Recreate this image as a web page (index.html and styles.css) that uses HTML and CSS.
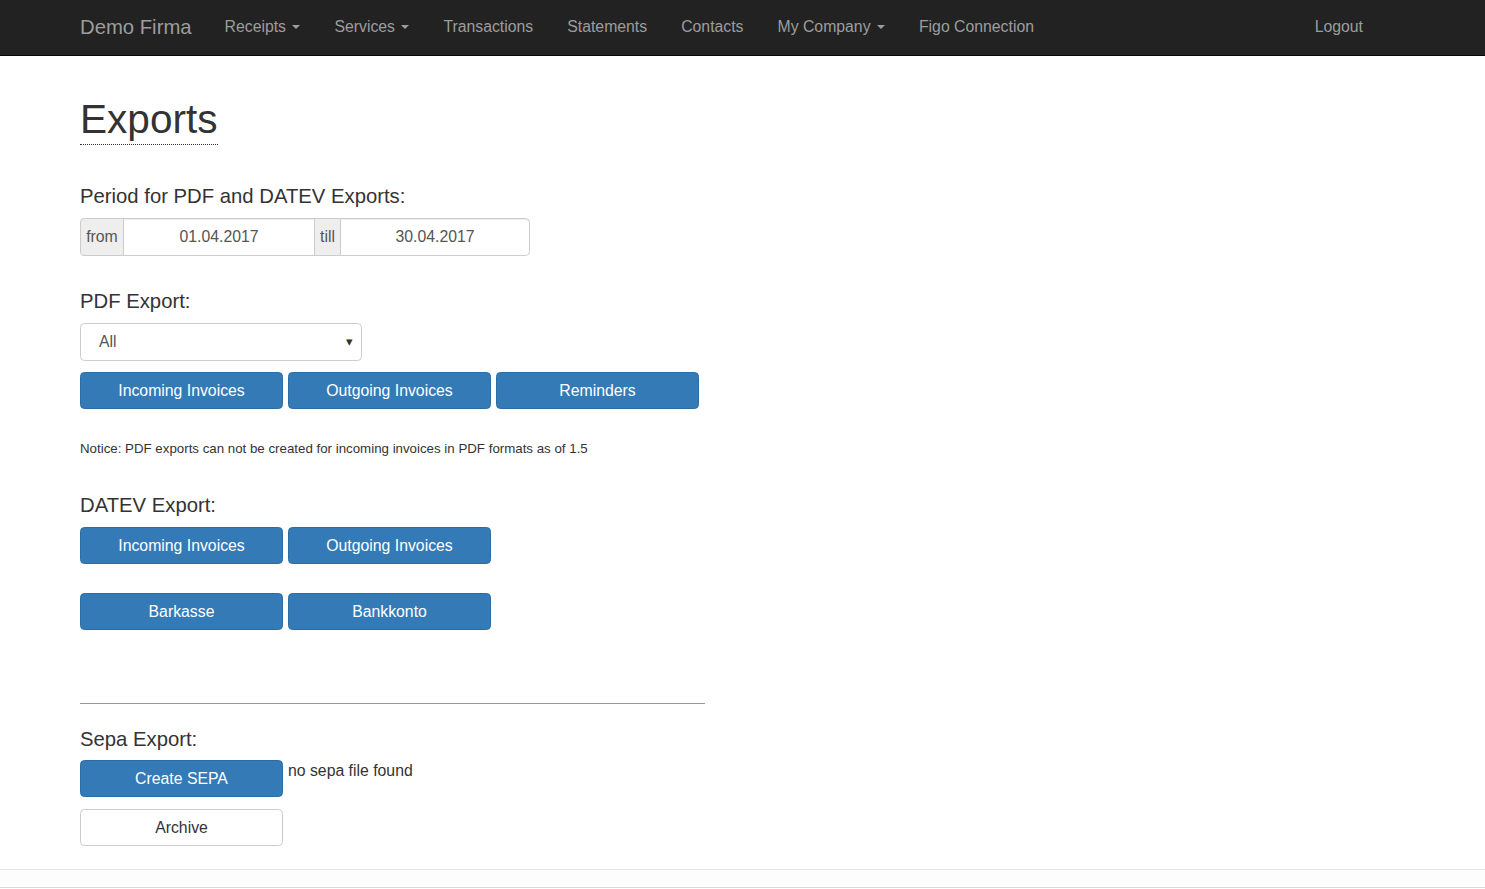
FILE: index.html
```html
<!DOCTYPE html>
<html>
<head>
<meta charset="utf-8">
<title>Exports</title>
<link rel="stylesheet" href="styles.css">
</head>
<body>
<nav class="navbar">
  <a class="brand" href="#">Demo Firma</a>
  <ul class="nav">
    <li><a href="#">Receipts <span class="caret"></span></a></li>
    <li><a href="#">Services <span class="caret"></span></a></li>
    <li><a href="#">Transactions</a></li>
    <li><a href="#">Statements</a></li>
    <li><a href="#">Contacts</a></li>
    <li><a href="#">My Company <span class="caret"></span></a></li>
    <li><a href="#">Figo Connection</a></li>
  </ul>
  <ul class="nav nav-right">
    <li><a href="#">Logout</a></li>
  </ul>
</nav>

<main class="content">
  <h1 class="title"><span class="title-text">Exports</span></h1>

  <h4 class="section period">Period for PDF and DATEV Exports:</h4>
  <div class="input-group">
    <span class="addon addon-from">from</span>
    <span class="field field-from">01.04.2017</span>
    <span class="addon addon-till">till</span>
    <span class="field field-till">30.04.2017</span>
  </div>

  <h4 class="section pdf">PDF Export:</h4>
  <div class="select">
    <span>All</span>
    <span class="arrow">▾</span>
  </div>
  <div class="btn-row row-pdf">
    <button class="btn btn-primary">Incoming Invoices</button>
    <button class="btn btn-primary">Outgoing Invoices</button>
    <button class="btn btn-primary">Reminders</button>
  </div>
  <p class="notice">Notice: PDF exports can not be created for incoming invoices in PDF formats as of 1.5</p>

  <h4 class="section datev">DATEV Export:</h4>
  <div class="btn-row row-datev">
    <button class="btn btn-primary">Incoming Invoices</button>
    <button class="btn btn-primary">Outgoing Invoices</button>
  </div>
  <div class="btn-row row-cash">
    <button class="btn btn-primary">Barkasse</button>
    <button class="btn btn-primary">Bankkonto</button>
  </div>

  <hr class="divider">

  <h4 class="section sepa">Sepa Export:</h4>
  <div class="sepa-row">
    <button class="btn btn-primary">Create SEPA</button>
    <span class="sepa-status">no sepa file found</span>
  </div>
  <div class="btn-row row-archive">
    <button class="btn btn-default">Archive</button>
  </div>
</main>
<footer class="footer"></footer>
</body>
</html>
```
FILE: styles.css
```css
* { box-sizing: border-box; }
html, body { margin: 0; padding: 0; }
body {
  font-family: "Liberation Sans", Arial, Helvetica, sans-serif;
  font-size: 15.8px;
  line-height: 22px;
  color: #333;
  background: #fff;
}
a { text-decoration: none; }

.navbar {
  display: flex;
  align-items: center;
  height: 56px;
  background: #222;
  border-bottom: 1px solid #080808;
  padding: 0 122px 2px 80px;
}
.brand {
  font-size: 20.3px;
  color: #9d9d9d;
  margin-right: 16px;
  line-height: 22px;
}
.nav {
  display: flex;
  list-style: none;
  margin: 0;
  padding: 0;
}
.nav a {
  display: block;
  padding: 0 17px;
  color: #9d9d9d;
  font-size: 15.8px;
  line-height: 22px;
}
.nav-right { margin-left: auto; }
.nav-right a { padding-right: 0; }
.caret {
  display: inline-block;
  width: 0;
  height: 0;
  margin-left: 2px;
  vertical-align: middle;
  border-top: 4.4px solid #9d9d9d;
  border-left: 4.4px solid transparent;
  border-right: 4.4px solid transparent;
}

.content { padding: 0 80px; }

.title {
  margin: 41px 0 0;
  font-size: 40.6px;
  line-height: 44px;
  font-weight: 500;
}
.title-text {
  border-bottom: 1px dotted #333;
  padding-bottom: 2px;
}

.section {
  margin: 0;
  font-size: 20.3px;
  line-height: 22px;
  font-weight: 500;
}
.period { margin-top: 44px; }
.pdf { margin-top: 34px; }
.datev { margin-top: 36px; }
.sepa { margin-top: 24px; }

.input-group {
  display: flex;
  margin-top: 11px;
  height: 38px;
  width: 450px;
}
.addon {
  display: flex;
  align-items: center;
  justify-content: center;
  background: #eee;
  border: 1px solid #ccc;
  color: #555;
}
.addon-from {
  width: 43px;
  border-right: 0;
  border-radius: 4.4px 0 0 4.4px;
}
.addon-till {
  width: 25px;
  border-left: 0;
  border-right: 0;
}
.field {
  display: flex;
  align-items: center;
  justify-content: center;
  border: 1px solid #ccc;
  color: #555;
  background: #fff;
  box-shadow: inset 0 1px 1px rgba(0,0,0,.075);
}
.field-from { width: 192px; }
.field-till {
  width: 190px;
  border-radius: 0 4.4px 4.4px 0;
}

.select {
  display: flex;
  align-items: center;
  justify-content: space-between;
  margin-top: 11px;
  width: 282px;
  height: 38px;
  padding: 0 8px 0 18px;
  border: 1px solid #ccc;
  border-radius: 4.4px;
  color: #555;
  background: #fff;
}
.select .arrow {
  color: #333;
  font-size: 13px;
}

.btn-row {
  display: flex;
  gap: 5px;
}
.row-pdf { margin-top: 11px; }
.row-datev { margin-top: 11px; }
.row-cash { margin-top: 29px; }
.row-archive { margin-top: 12px; }

.btn {
  width: 203px;
  height: 37px;
  font-family: inherit;
  font-size: 15.8px;
  line-height: 22px;
  border-radius: 4.4px;
  border: 1px solid transparent;
  padding: 0 10px;
  cursor: pointer;
}
.btn-primary {
  background: #337ab7;
  border-color: #2e6da4;
  color: #fff;
}
.btn-default {
  background: #fff;
  border-color: #ccc;
  color: #333;
}

.notice {
  margin: 30px 0 0;
  font-size: 13.3px;
  line-height: 19px;
}

.divider {
  margin: 73px 0 0;
  width: 625px;
  border: 0;
  border-top: 1px solid #999;
  height: 0;
}

.sepa-row {
  display: flex;
  align-items: flex-start;
  margin-top: 10px;
}
.sepa-status { margin-left: 5px; }

.footer {
  margin-top: 23px;
  height: 19px;
  border-top: 1px solid #e5e5e5;
  border-bottom: 1px solid #dcdcdc;
  background: #fdfdfd;
}
```
